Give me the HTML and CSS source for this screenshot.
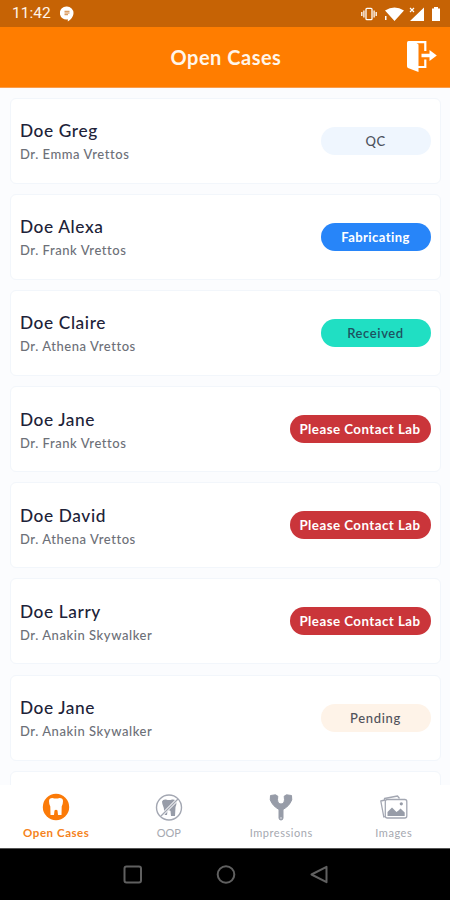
FILE: index.html
```html
<!DOCTYPE html>
<html lang="en">
<head>
<meta charset="utf-8">
<title>Open Cases</title>
<link rel="stylesheet" href="styles.css">
</head>
<body>
<div class="phone">
  <div class="status">
    <span class="clock">11:42</span>
    <svg class="chat" width="14" height="16" viewBox="0 0 14 16"><path fill="#fff" d="M7 .5a6.500 6.500 0 0 1 6.500 6.500c0 3.700-2.700 6.600-5.700 8.500v-2.200A6.500 6.500 0 1 1 7 .5z"/><path stroke="#c66305" stroke-width=".8" d="M4.500 5.300h5M4.500 7h5M4.500 8.700h3.500"/></svg>
    <svg class="signals" width="82" height="16" viewBox="0 0 82 16"><g fill="none" stroke="#fff" stroke-width="1.300"><rect x="6" y="2.300" width="6" height="11.400" rx="1"/><path d="M3.900 4.500v7M14.100 4.500v7M1.800 6v4M16.200 6v4"/></g><path fill="#fff" d="M25 4.500q9.500-6 19 0L34.500 15zM25 10h1.500v4H25zM64 1.500V15H50zM72 2.500h2V1h4v1.500h2V15h-8z"/><path stroke="#fff" stroke-width="1.200" d="M50 2l4 4M54 2l-4 4"/></svg>
  </div>
  <header class="header">
    <h1>Open Cases</h1>
    <svg class="exit" width="31" height="32" viewBox="0 0 31 32"><path fill="#fff" d="M1 2.500Q1 1 2.500 1H8l4.500 3.500V32L2 28Q1 27.500 1 26z"/><path fill="none" stroke="#fff" stroke-width="2.200" d="M8 2.200h11.300V11M12 27h7.300v-7.500"/><path fill="#fff" d="M15.500 13.800h8V10l7.300 5.500-7.300 5.500v-3.800h-8z"/></svg>
  </header>
  <main class="list">
    <article class="card"><div><h2>Doe Greg</h2><p>Dr. Emma Vrettos</p></div><span class="pill qc">QC</span></article>
    <article class="card"><div><h2>Doe Alexa</h2><p>Dr. Frank Vrettos</p></div><span class="pill fabricating">Fabricating</span></article>
    <article class="card"><div><h2>Doe Claire</h2><p>Dr. Athena Vrettos</p></div><span class="pill received">Received</span></article>
    <article class="card"><div><h2>Doe Jane</h2><p>Dr. Frank Vrettos</p></div><span class="pill contact">Please Contact Lab</span></article>
    <article class="card"><div><h2>Doe David</h2><p>Dr. Athena Vrettos</p></div><span class="pill contact">Please Contact Lab</span></article>
    <article class="card"><div><h2>Doe Larry</h2><p>Dr. Anakin Skywalker</p></div><span class="pill contact">Please Contact Lab</span></article>
    <article class="card"><div><h2>Doe Jane</h2><p>Dr. Anakin Skywalker</p></div><span class="pill pending">Pending</span></article>
    <article class="card"></article>
  </main>
  <nav class="tabs">
    <div class="tab active"><svg width="28" height="28" viewBox="0 0 28 28"><circle cx="14" cy="14" r="13.200" fill="#fb7a08"/><path fill="#fff" d="M7 8Q7 5 10.500 5 14 6.200 17.500 5 21 5 21 8 21 11 19.700 13.500L19.500 22H16L15.500 17.500Q14 16 12.500 17.500L12 22H8.500L8.300 13.500Q7 11 7 8z"/></svg><span>Open Cases</span></div>
    <div class="tab"><svg width="28" height="28" viewBox="0 0 28 28"><circle cx="14" cy="14.500" r="12.500" fill="none" stroke="#a3a7b2" stroke-width="1.400"/><path fill="#979ca8" d="M7 8.500Q8 6 11 6.500 14 7.500 17 6.500 21 6 21.500 9.500 21.500 12 20.500 14L20 23H16L15.500 18Q14 16.500 12.500 18L12 22H9.500L8.800 15Q7 11 7 8.500z"/><path stroke="#fff" stroke-width="3" d="M6 23L22.500 6.500"/><path stroke="#a3a7b2" stroke-width="1.300" d="M5.500 23.500L23 6"/></svg><span class="oop">OOP</span></div>
    <div class="tab"><svg width="28" height="28" viewBox="0 0 28 28"><path fill="#979ca8" stroke="#979ca8" stroke-width="1" stroke-linejoin="round" d="M3.500 2.500L8.500 1.800 10.800 3.200Q9.500 11 14 11T17.200 3.200L19.500 1.800 24.500 2.500Q26 7 22.500 11 20 14.500 16 16.500V25Q16 27 14 27T12 25V16.500Q8 14.500 5.500 11 2 7 3.500 2.500z"/><circle cx="14" cy="25" r=".7" fill="#fff"/></svg><span>Impressions</span></div>
    <div class="tab"><svg width="28" height="28" viewBox="0 0 28 28"><g fill="none" stroke="#a3a7b2" stroke-width="1.300" stroke-linejoin="round"><path d="M5.500 23.500L3.800 24 .8 8 5 7M4.500 7V5.500L17.500 3 19.500 5.500"/><rect x="5.300" y="6.500" width="21.500" height="18.500" rx="2"/></g><path fill="#979ca8" d="M7.500 23V19L9.500 17 12 14.500 14 16.500 16.500 19 18.500 17.500 20.500 15.500 24.700 19.500V23z"/><circle cx="21.300" cy="10.800" r="1.600" fill="#979ca8"/></svg><span>Images</span></div>
  </nav>
  <footer class="system">
    <svg width="20" height="20" viewBox="0 0 20 20"><rect x="1.500" y="1.500" width="16.500" height="16" rx="2"/></svg>
    <svg width="20" height="20" viewBox="0 0 20 20"><circle cx="10" cy="9.500" r="8.300"/></svg>
    <svg width="20" height="20" viewBox="0 0 20 20"><path d="M17.500 1.800v15.400L2.500 9.500z"/></svg>
  </footer>
</div>
</body>
</html>
```
FILE: styles.css
```css
* { box-sizing: border-box; }
body { margin: 0; font-family: Lato, "Liberation Sans", sans-serif; }
h1, h2, p { margin: 0; }
svg { display: block; flex: none; }
.phone { width: 450px; height: 900px; display: flex; flex-direction: column; overflow: hidden; background: #fbfcfe; }
.status { height: 27px; flex: none; display: flex; align-items: center; padding: 0 8px 0 12px; background: #c66305; }
.clock { color: #fff4e8; font: 400 15.500px/27px Roboto, sans-serif; width: 38px; white-space: nowrap; }
.chat { margin-left: 10px; }
.signals { margin-left: auto; }
.header { height: 61px; flex: none; background: #ff7d00; display: grid; grid-template-columns: 46px 1fr 44px; align-items: center; border-bottom: 1px solid #f99d4d; }
.header h1 { grid-column: 2; text-align: center; color: #fff6ea; font-size: 20px; line-height: 28px; font-weight: 700; letter-spacing: .5px; }
.exit { margin-bottom: 3px; }
.list { flex: 1; min-height: 0; overflow: hidden; display: flex; flex-direction: column; gap: 10.200px; padding: 9.500px 9.500px 0 10px; }
.card { height: 86px; flex: none; display: flex; align-items: center; justify-content: space-between; padding: 0 9px; background: #fff; border: 1px solid #f2f6fb; border-radius: 6px; }
.card h2 { color: #202238; font-size: 17.300px; line-height: 24px; font-weight: 500; letter-spacing: .6px; margin-top: 1px; }
.card p { color: #6d7078; font-size: 13px; line-height: 18px; font-weight: 500; letter-spacing: .56px; margin-top: 2px; }
.pill { width: 110px; height: 28px; border-radius: 14px; text-align: center; font-size: 13px; line-height: 28px; font-weight: 700; letter-spacing: .42px; white-space: nowrap; }
.qc { background: #eff6fe; color: #4d535c; font-weight: 500; }
.fabricating { background: #2785f9; color: #fff; }
.received { background: #20dfc3; color: #1d5261; font-weight: 600; letter-spacing: .6px; }
.contact { width: 141px; background: #ca353a; color: #fff; font-size: 13.300px; letter-spacing: .47px; }
.pending { background: #fef3e8; color: #51525a; font-weight: 500; letter-spacing: .7px; }
.tabs { height: 63px; flex: none; display: grid; grid-template-columns: repeat(4, 1fr); background: #fff; }
.tab { display: flex; flex-direction: column; align-items: center; padding-top: 8px; color: #a5a8b0; font-size: 11px; line-height: 14px; letter-spacing: .55px; }
.tab span { margin-top: 5px; }
.tab .oop { letter-spacing: 0; }
.active { color: #f58220; font-weight: 700; font-size: 11.500px; }
.system { height: 52px; flex: none; background: #000; border-top: 1px solid #555; display: flex; justify-content: center; align-items: center; gap: 73px; padding-left: 1px; }
.system svg { fill: none; stroke: #606060; stroke-width: 2; stroke-linejoin: round; }
```
